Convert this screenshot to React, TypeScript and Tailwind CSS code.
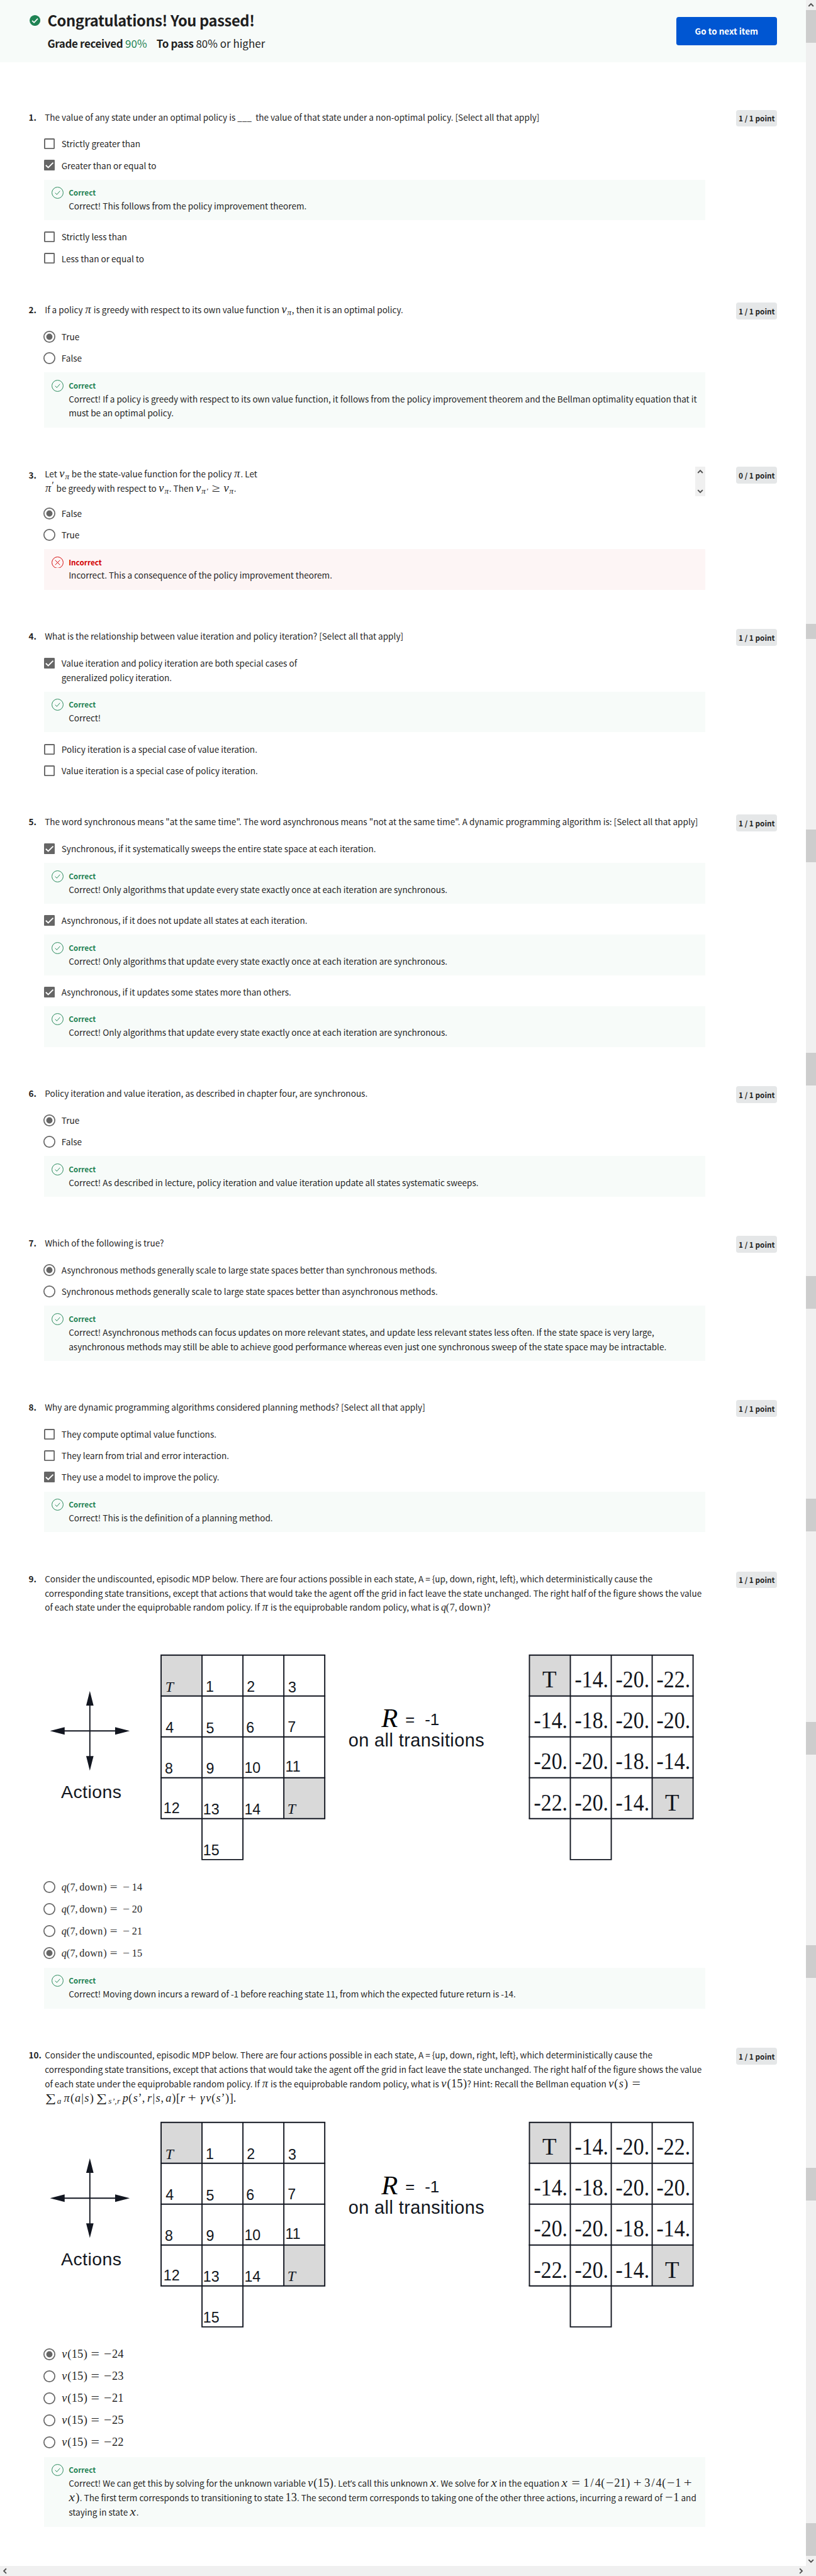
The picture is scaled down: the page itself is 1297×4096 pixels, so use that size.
import React from "react";

type Kids = { children?: React.ReactNode };

/* ---------- math helpers ---------- */

const M = ({ children }: Kids) => (
  <span className="font-['Liberation_Serif',serif] text-[19.36px] leading-[0]">{children}</span>
);
const Ms = ({ children }: Kids) => (
  <span className="font-['Liberation_Serif',serif] text-[17px] leading-[0]">{children}</span>
);

const advance: Record<string, string> = {
  v: "w-[0.485em]",
  s: "w-[0.469em]",
  a: "w-[0.529em]",
  r: "w-[0.451em]",
  x: "w-[0.572em] scale-x-[1.15]",
  q: "w-[0.46em]",
  p: "w-[0.503em]",
  γ: "w-[0.543em]",
  π: "w-[0.6em]",
};

const V = ({ children }: { children: string }) => (
  <i className={`inline-block text-center ${advance[children] ?? ""}`}>{children}</i>
);
const Sub = ({ children }: Kids) => (
  <span className="align-[-0.22em] text-[0.72em] italic leading-[0]">{children}</span>
);
const Eq = () => (
  <span className="mx-[0.278em] inline-block w-[0.778em] text-center">
    <span className="inline-block scale-x-[1.3]">=</span>
  </span>
);
const Minus = () => (
  <span className="inline-block w-[0.778em] text-center">
    <span className="inline-block scale-x-[1.2]">−</span>
  </span>
);
const Plus = () => (
  <span className="mx-[0.222em] inline-block w-[0.778em] text-center">
    <span className="inline-block scale-x-[1.25]">+</span>
  </span>
);
const P = ({ children }: Kids) => <span className="inline-block w-[0.389em] text-center">{children}</span>;
const Slash = () => <span className="inline-block w-[0.5em] text-center">/</span>;
const Gap = () => <span className="ml-[0.167em]" />;
const Sum = () => (
  <span className="inline-block w-[1.05em] text-center">
    <span className="inline-block scale-x-[1.3]">∑</span>
  </span>
);
const Pi = () => (
  <M>
    <V>π</V>
  </M>
);
const VPi = () => (
  <M>
    <V>v</V>
    <Sub>
      <V>π</V>
    </Sub>
  </M>
);

/* ---------- controls ---------- */

const Checkbox = ({ on }: { on?: boolean }) => (
  <svg className="mt-2 ml-0 h-[18px] w-[18px] shrink-0" viewBox="0 0 18 18">
    {on ? (
      <>
        <rect width="18" height="18" rx="1.5" fill="#666" />
        <path d="M3 9.2 7 13.2 15.3 4.8" fill="none" stroke="#fff" strokeWidth="2" />
      </>
    ) : (
      <rect x="1" y="1" width="16" height="16" rx="1" fill="#fff" stroke="#666" strokeWidth="2" />
    )}
  </svg>
);

const Radio = ({ on }: { on?: boolean }) => (
  <svg className="mt-[7px] -ml-px -mr-px h-5 w-5 shrink-0" viewBox="0 0 20 20">
    <circle cx="10" cy="10" r="9.1" fill="#fff" stroke="#666" strokeWidth="1.8" />
    {on && <circle cx="10" cy="10" r="5.2" fill="#666" />}
  </svg>
);

type Opt = { on?: boolean; lines: React.ReactNode[]; kind?: "radio" | "check"; tall?: boolean };

const Option = ({ on, lines, kind, tall }: Opt) => (
  <div className={tall ? "flex pb-[7.9px]" : "flex pb-[7px]"}>
    {kind === "check" ? <Checkbox on={on} /> : <Radio on={on} />}
    <div className="ml-[11px] pt-[5px]">
      {lines.map((l, i) => (
        <div key={i} className="h-6 whitespace-nowrap leading-6">
          {l}
        </div>
      ))}
    </div>
  </div>
);

const Feedback = ({ bad, lines, tall }: { bad?: boolean; lines: React.ReactNode[]; tall?: boolean }) => (
  <div className={`mt-[5px] mb-[11px] flex pt-3 pl-3 ${tall ? "pb-[13px]" : "pb-3"} ${bad ? "bg-[#fdf5f5]" : "bg-[#f7fbf9]"}`}>
    <svg
      className="h-5 w-5 shrink-0"
      viewBox="0 0 20 20"
      fill="none"
      stroke={bad ? "#d30001" : "#1f8354"}
      strokeWidth="1"
    >
      <circle cx="10" cy="10" r="9.4" />
      <path d={bad ? "M6 6 14 14M14 6 6 14" : "M6 10.2 8.8 13 14 7"} />
    </svg>
    <div className="ml-[9px]">
      <div className={`h-5 text-[12.4px] font-bold leading-5 ${bad ? "text-[#d30001]" : "text-[#1f8354]"}`}>
        {bad ? "Incorrect" : "Correct"}
      </div>
      {lines.map((l, i) => (
        <div key={i} className="h-6 whitespace-nowrap leading-6">
          {l}
        </div>
      ))}
    </div>
  </div>
);

const Question = ({
  n,
  lines,
  score = "1 / 1 point",
  wide,
  children,
}: {
  n: number;
  lines: React.ReactNode[];
  score?: string;
  wide?: React.ReactNode;
  children: React.ReactNode;
}) => (
  <section className="mb-[55px] flex pl-12">
    <div className={`w-[26px] shrink-0 whitespace-nowrap font-bold leading-6 ${n === 3 ? "pt-0.5" : ""}`}>{n}.</div>
    <div className="w-[1107px] shrink-0">
      <div className={`flex justify-between ${n === 3 ? "h-[61px]" : n > 8 ? "" : "h-10"}`}>
        <div className="pl-px">
          {lines.map((l, i) => (
            <div key={i} className="h-6 whitespace-nowrap leading-6">
              {l}
            </div>
          ))}
        </div>
        {wide}
      </div>
      {children}
    </div>
    <div className="ml-[52px] flex h-7 w-[68px] items-center justify-center rounded-[4px] bg-[#e5e7e8] text-[12.4px] font-bold">
      {score}
    </div>
  </section>
);

/* ---------- grid world figure ---------- */

const INK = "#121620";
const C = 68.5;

const cells: [string, number, number][] = [
  ["1", 344.8, 61.2], ["2", 413.4, 61.2], ["3", 482.8, 62.5],
  ["4", 277.6, 130], ["5", 345.3, 131], ["6", 412.3, 129.5], ["7", 482, 128.5],
  ["8", 276.3, 198], ["9", 345.3, 198], ["10", 409.4, 197], ["11", 478, 195.5],
  ["12", 274, 265], ["13", 340.2, 267], ["14", 409.4, 267], ["15", 340.2, 335],
];

const values = [
  ["T", "-14.", "-20.", "-22."],
  ["-14.", "-18.", "-20.", "-20."],
  ["-20.", "-20.", "-18.", "-14."],
  ["-22.", "-20.", "-14.", "T"],
];

const Grid = ({ x }: { x: number }) => (
  <g>
    <rect x={x} y={0} width={C} height={C} fill="#d9d9d9" />
    <rect x={x + 3 * C} y={3 * C} width={C} height={C} fill="#d9d9d9" />
    <g stroke={INK} strokeWidth="2" fill="none">
      {[0, 1, 2, 3, 4].map((i) => (
        <path key={i} d={`M${x - 1} ${i * C}H${x + 4 * C + 1}M${x + i * C} 0V${4 * C}`} />
      ))}
      <path d={`M${x + C} ${4 * C}V${5 * C}H${x + 2 * C}V${4 * C}`} />
    </g>
  </g>
);

const Figure = () => (
  <svg className="block h-[356px] w-[1107px]" viewBox="74 -6 1107 356">
    <path d="M90 127H212M150.7 66V188" stroke={INK} strokeWidth="2" />
    <path
      fill={INK}
      d="M84 127 108.5 120.8V133.2ZM217.5 127 193 120.8V133.2ZM150.7 60 144.5 84.5H156.9ZM150.7 193.5 144.5 169H156.9Z"
    />
    <g fill={INK} fontFamily="Liberation Sans, sans-serif">
      <text x="102.5" y="239.5" fontSize="30" textLength="101">Actions</text>
      <Grid x={270} />
      {cells.map(([t, x, y]) => (
        <text key={t} x={x} y={y} fontSize="24.5">{t}</text>
      ))}
      <text x="679" y="117" fontSize="27">=</text>
      <text x="711.5" y="117" fontSize="27.5">-1</text>
      <text x="583.5" y="153.4" fontSize="30.5" textLength="227.5">on all transitions</text>
    </g>
    <g fill={INK} fontFamily="Liberation Serif, serif">
      <text x="277" y="61" fontSize="25" fontStyle="italic">T</text>
      <text x="481.5" y="265.5" fontSize="25" fontStyle="italic">T</text>
      <text x="639" y="120" fontSize="45" fontStyle="italic" fill="#000">R</text>
      <Grid x={886.7} />
      {values.map((row, r) =>
        row.map((v, c) =>
          v === "T" ? (
            <text key={c} x={886 + c * C + C / 2} y={54.5 + r * C} fontSize="39" textAnchor="middle">T</text>
          ) : (
            <text key={`${r}${c}`} x={886.5 + c * C + 7.5} y={54.5 + r * C} fontSize="39" textLength="56.5" lengthAdjust="spacingAndGlyphs">
              {v}
            </text>
          )
        )
      )}
    </g>
  </svg>
);

/* ---------- scrollbars ---------- */

const Arrow = ({ d, className }: { d: string; className?: string }) => (
  <svg className={`h-[17px] w-[17px] ${className ?? ""}`} viewBox="0 0 17 17" fill="none" stroke="#505050" strokeWidth="2">
    <path d={d} />
  </svg>
);
const UP = "M4.5 10.5 8.5 6.5 12.5 10.5";
const DOWN = "M4.5 6.5 8.5 10.5 12.5 6.5";

const Thumb = ({ className }: { className: string }) => <div className={`w-full shrink-0 bg-[#cdcdcd] ${className}`} />;

const VBar = () => (
  <div className="flex w-[17px] shrink-0 flex-col bg-[#f0f0f0]">
    <Arrow d={UP} />
    <Thumb className="h-[55px]" />
    <Thumb className="mt-[973px] h-[25px]" />
    <Thumb className="mt-[319px] h-[55px]" />
    <Thumb className="mt-[319px] h-[55px]" />
    <Thumb className="mt-[319px] h-[55px]" />
    <Thumb className="mt-[318px] h-[55px]" />
    <Thumb className="mt-[319px] h-[55px]" />
    <Thumb className="mt-[319px] h-[55px]" />
    <Thumb className="mt-[318px] h-[55px]" />
    <Thumb className="mt-[540px] h-[55px]" />
    <Arrow d={DOWN} />
  </div>
);

const Down = () => <span className="tracking-[0.45px]">down</span>;

const qOpt = (v: string) => (
  <Ms>
    <V>q</V><P>(</P>7,<Gap /><Down /><P>)</P><Eq /><span className="mx-[3px]"><Minus /></span>{v}
  </Ms>
);
const vOpt = (v: string) => (
  <M>
    <V>v</V><P>(</P>15<P>)</P><Eq /><Minus />{v}
  </M>
);

const only = "Correct! Only algorithms that update every state exactly once at each iteration are synchronous.";
const intro = [
  "Consider the undiscounted, episodic MDP below. There are four actions possible in each state, A = {up, down, right, left}, which deterministically cause the",
  "corresponding state transitions, except that actions that would take the agent off the grid in fact leave the state unchanged. The right half of the figure shows the value",
];

export default function App() {
  return (
    <div className="h-[4096px] w-[1297px] overflow-hidden bg-white">
      <div className="flex h-[4315px] w-[1366px] flex-col bg-white font-['Noto_Sans_CJK_SC',sans-serif] text-[14.32px] text-[#1f1f1f] [zoom:0.94932]">
        <div className="flex h-[4298px]">
          <div className="w-[1349px]">
            <header className="mb-20 flex h-[104px] justify-between bg-[#f7fbf9] pr-12 pl-[49px]">
              <div className="flex">
                <svg className="mt-[25px] h-[18px] w-[18px]" viewBox="0 0 18 18">
                  <circle cx="9" cy="9" r="9" fill="#1f8354" />
                  <path d="M4.3 9.4 7.5 12.4 13.7 5.9" fill="none" stroke="#fff" strokeWidth="1.8" />
                </svg>
                <div className="ml-[12.5px] whitespace-nowrap pt-4">
                  <h1 className="h-9 text-[25px] font-bold leading-9 tracking-[-0.42px]">Congratulations! You passed!</h1>
                  <p className="mt-[7.5px] h-7 text-[17.9px] leading-7">
                    <b className="tracking-[-0.37px]">Grade received</b> <span className="text-[#1f8354]">90%</span>
                    <b className="ml-4 tracking-[-0.37px]">To pass</b> 80% or higher
                  </p>
                </div>
              </div>
              <button className="mt-7 h-12 w-[169px] rounded-[4px] bg-[#0056d2] pb-px text-[14.2px] font-bold text-white">
                Go to next item
              </button>
            </header>

            <Question n={1} lines={[<>The value of any state under an optimal policy is ___&nbsp; the value of that state under a non-optimal policy. [Select all that apply]</>]}>
              <Option kind="check" lines={["Strictly greater than"]} />
              <Option kind="check" on lines={["Greater than or equal to"]} />
              <Feedback lines={["Correct! This follows from the policy improvement theorem."]} />
              <Option kind="check" lines={["Strictly less than"]} />
              <Option kind="check" lines={["Less than or equal to"]} />
            </Question>

            <Question n={2} lines={[<>If a policy <Pi /> is greedy with respect to its own value function <VPi />, then it is an optimal policy.</>]}>
              <Option on lines={["True"]} />
              <Option lines={["False"]} />
              <Feedback
                lines={[
                  "Correct! If a policy is greedy with respect to its own value function, it follows from the policy improvement theorem and the Bellman optimality equation that it",
                  "must be an optimal policy.",
                ]}
              />
            </Question>

            <Question
              n={3}
              score="0 / 1 point"
              lines={[
                <>Let <VPi /> be the state-value function for the policy <Pi />. Let</>,
                <>
                  <Pi />
                  <span className="relative -top-[5px] inline-block w-[4.5px] font-['Liberation_Serif'] text-[17px] leading-[0]">′</span> be greedy with respect to <VPi />. Then{" "}
                  <M>
                    <V>v</V><Sub><V>π</V>′</Sub>
                    <span className="mx-[0.278em] inline-block w-[0.778em] scale-x-[1.3] text-center">≥</span>
                    <V>v</V><Sub><V>π</V></Sub>
                  </M>.
                </>,
              ]}
              wide={
                <div className="flex h-[49px] w-[17px] flex-col justify-between bg-[#f0f0f0]">
                  <Arrow d={UP} />
                  <Arrow d={DOWN} />
                </div>
              }
            >
              <Option on lines={["False"]} />
              <Option lines={["True"]} />
              <Feedback bad lines={["Incorrect. This a consequence of the policy improvement theorem."]} />
            </Question>

            <Question n={4} lines={["What is the relationship between value iteration and policy iteration? [Select all that apply]"]}>
              <Option kind="check" on lines={["Value iteration and policy iteration are both special cases of", "generalized policy iteration."]} />
              <Feedback lines={["Correct!"]} />
              <Option kind="check" lines={["Policy iteration is a special case of value iteration."]} />
              <Option kind="check" lines={["Value iteration is a special case of policy iteration."]} />
            </Question>

            <Question n={5} lines={['The word synchronous means "at the same time". The word asynchronous means "not at the same time". A dynamic programming algorithm is: [Select all that apply]']}>
              <Option kind="check" on lines={["Synchronous, if it systematically sweeps the entire state space at each iteration."]} />
              <Feedback lines={[only]} />
              <Option kind="check" on lines={["Asynchronous, if it does not update all states at each iteration."]} />
              <Feedback lines={[only]} />
              <Option kind="check" on lines={["Asynchronous, if it updates some states more than others."]} />
              <Feedback lines={[only]} />
            </Question>

            <Question n={6} lines={["Policy iteration and value iteration, as described in chapter four, are synchronous."]}>
              <Option on lines={["True"]} />
              <Option lines={["False"]} />
              <Feedback lines={["Correct! As described in lecture, policy iteration and value iteration update all states systematic sweeps."]} />
            </Question>

            <Question n={7} lines={["Which of the following is true?"]}>
              <Option on lines={["Asynchronous methods generally scale to large state spaces better than synchronous methods."]} />
              <Option lines={["Synchronous methods generally scale to large state spaces better than asynchronous methods."]} />
              <Feedback
                lines={[
                  "Correct! Asynchronous methods can focus updates on more relevant states, and update less relevant states less often. If the state space is very large,",
                  "asynchronous methods may still be able to achieve good performance whereas even just one synchronous sweep of the state space may be intractable.",
                ]}
              />
            </Question>

            <Question n={8} lines={["Why are dynamic programming algorithms considered planning methods? [Select all that apply]"]}>
              <Option kind="check" lines={["They compute optimal value functions."]} />
              <Option kind="check" lines={["They learn from trial and error interaction."]} />
              <Option kind="check" on lines={["They use a model to improve the policy."]} />
              <Feedback lines={["Correct! This is the definition of a planning method."]} />
            </Question>

            <Question
              n={9}
              lines={[
                ...intro,
                <>
                  of each state under the equiprobable random policy. If <Pi /> is the equiprobable random policy, what is{" "}
                  <Ms><V>q</V><P>(</P>7,<Gap /><Down /><P>)</P></Ms>?
                </>,
              ]}
            >
              <div className="mt-[61.5px] mb-[22px]">
                <Figure />
              </div>
              {["14", "20", "21", "15"].map((v) => (
                <Option key={v} tall on={v === "15"} lines={[qOpt(v)]} />
              ))}
              <Feedback lines={["Correct! Moving down incurs a reward of -1 before reaching state 11, from which the expected future return is -14."]} />
            </Question>

            <Question
              n={10}
              lines={[
                ...intro,
                <>
                  of each state under the equiprobable random policy. If <Pi /> is the equiprobable random policy, what is{" "}
                  <M><V>v</V><P>(</P>15<P>)</P></M>? Hint: Recall the Bellman equation <M><V>v</V><P>(</P><V>s</V><P>)</P><Eq /></M>
                </>,
                <M>
                  <Sum /><Sub><V>a</V></Sub><Gap /><V>π</V><P>(</P><V>a</V><span className="mx-[0.04em]">|</span><V>s</V><P>)</P><Gap /><Sum />
                  <Sub><V>s</V>’,<V>r</V></Sub><Gap /><V>p</V><P>(</P><V>s</V>’,<Gap /><V>r</V>
                  <span className="mx-[0.04em]">|</span><V>s</V>,<Gap /><V>a</V><P>)</P>[<V>r</V><Plus /><V>γ</V><V>v</V><P>(</P><V>s</V>’<P>)</P>].
                </M>,
              ]}
            >
              <div className="mt-[23px] mb-[21px]">
                <Figure />
              </div>
              {["24", "23", "21", "25", "22"].map((v) => (
                <Option key={v} tall on={v === "24"} lines={[vOpt(v)]} />
              ))}
              <Feedback
                tall
                lines={[
                  <>
                    Correct! We can get this by solving for the unknown variable <M><V>v</V><P>(</P>15<P>)</P></M>. Let
                    <span className="font-['Open_Sans']">’</span>s call this unknown <M><V>x</V></M>. We solve for <M><V>x</V></M> in the equation{" "}
                    <M><V>x</V><Eq />1<Slash />4<P>(</P><Minus />21<P>)</P><Plus />3<Slash />4<P>(</P><Minus />1<Plus /></M>
                  </>,
                  <>
                    <M><V>x</V><P>)</P></M>. The first term corresponds to transitioning to state <M>13</M>. The second term corresponds to taking one of the other three actions, incurring a reward of <M><Minus />1</M> and
                  </>,
                  <>staying in state <M><V>x</V></M>.</>,
                ]}
              />
            </Question>
          </div>
          <VBar />
        </div>
        <div className="flex h-[17px] justify-between bg-[#f0f0f0] pr-[17px]">
          <Arrow d="M10.5 4.5 6.5 8.5 10.5 12.5" />
          <Arrow d="M6.5 4.5 10.5 8.5 6.5 12.5" />
        </div>
      </div>
    </div>
  );
}
